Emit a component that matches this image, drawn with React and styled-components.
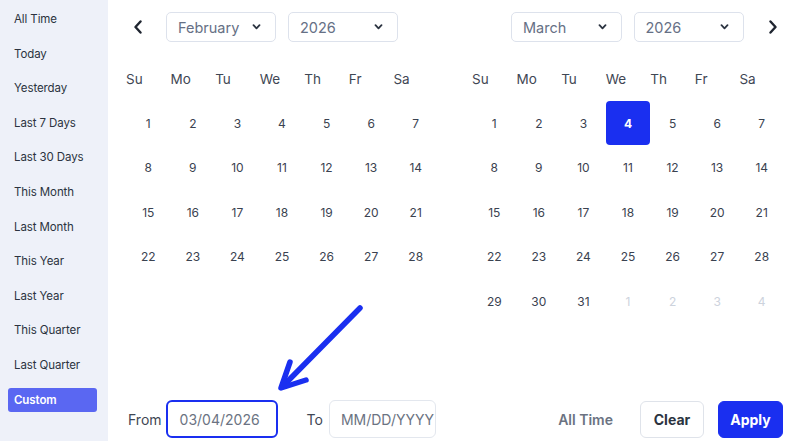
import React from "react";
import styled, { createGlobalStyle } from "styled-components";

const Global = createGlobalStyle`
  html, body { margin: 0; padding: 0; background: #fff; }
  body { font-family: Inter, "Noto Sans", "Liberation Sans", sans-serif; }
  * { box-sizing: border-box; }
`;

const BLUE = "#1a2ff0";

const Page = styled.div`
  display: flex;
  width: 792px;
  height: 441px;
  overflow: hidden;
`;

const Sidebar = styled.nav`
  width: 108px;
  flex-shrink: 0;
  background: #eef1f9;
  padding: 7px 11px 0 8px;
  display: flex;
  flex-direction: column;
  gap: 10.6px;
`;

const SideItem = styled.div`
  height: 24px;
  line-height: 24px;
  padding-left: 6px;
  border-radius: 3px;
  font-size: 11.5px;
  letter-spacing: -0.1px;
  color: ${p => (p.$active ? "#fff" : "#2b3340")};
  font-weight: ${p => (p.$active ? 600 : 400)};
  background: ${p => (p.$active ? "#5a67f2" : "transparent")};
  white-space: nowrap;
`;

const Main = styled.main`
  position: relative;
  flex: 1;
  min-width: 0;
  padding: 12px 9px 3px 18px;
  display: flex;
  flex-direction: column;
`;

const Calendars = styled.div`
  display: flex;
  gap: 34px;
`;

const Calendar = styled.section`
  width: 312px;
  flex-shrink: 0;
`;

const Header = styled.div`
  display: flex;
  align-items: center;
  height: 30px;
  gap: 12px;
`;

const NavSlot = styled.div`
  width: 28px;
  height: 30px;
  display: flex;
  align-items: center;
  justify-content: ${p => (p.$end ? "flex-end" : "flex-start")};
  padding: ${p => (p.$end ? "0 6px 0 0" : "0 0 0 7px")};
  flex-shrink: 0;
`;

const Spacer = styled.div`
  width: ${p => p.$w}px;
  flex-shrink: 0;
`;

const Select = styled.div`
  width: ${p => p.$w}px;
  height: 30px;
  border: 1px solid #dde2ec;
  border-radius: 5px;
  display: flex;
  align-items: center;
  justify-content: space-between;
  padding: 0 14px 0 11px;
  font-size: 14.5px;
  color: #667085;
`;

const Weekdays = styled.div`
  display: grid;
  grid-template-columns: repeat(7, 1fr);
  height: 20px;
  margin-top: 27px;
  align-items: center;
`;

const Weekday = styled.div`
  font-size: 13.5px;
  color: #3f4754;
`;

const Days = styled.div`
  display: grid;
  grid-template-columns: repeat(7, 1fr);
  grid-auto-rows: 44.6px;
  margin-top: 12px;
`;

const Day = styled.div`
  display: flex;
  align-items: center;
  justify-content: center;
  font-size: 12px;
  color: ${p => (p.$selected ? "#fff" : p.$muted ? "#cdd3dd" : "#3a4250")};
  font-weight: ${p => (p.$selected ? 700 : 400)};
  background: ${p => (p.$selected ? BLUE : "transparent")};
  border-radius: 4px;
  width: 44px;
  height: 44px;
  justify-self: center;
`;

const Footer = styled.div`
  margin-top: auto;
  display: flex;
  align-items: center;
  height: 38px;
`;

const Label = styled.span`
  font-size: 14px;
  color: #3f4754;
  margin-left: 2px;
  margin-right: ${p => p.$mr || 6}px;
`;

const DateInput = styled.div`
  width: ${p => p.$w}px;
  height: 38px;
  border: ${p => (p.$focused ? `2px solid ${BLUE}` : "1px solid #e3e7ee")};
  border-radius: 6px;
  display: flex;
  align-items: center;
  padding-left: ${p => (p.$focused ? 12 : 11)}px;
  font-size: 14px;
  color: #6b7382;
  overflow: hidden;
  white-space: nowrap;
  margin-right: ${p => p.$mr || 0}px;
`;

const Grow = styled.div`
  flex: 1;
`;

const TextButton = styled.button`
  border: none;
  background: none;
  font-family: inherit;
  font-size: 14px;
  font-weight: 600;
  color: #6b7382;
  padding: 0;
  margin-right: 27px;
`;

const Button = styled.button`
  height: 37px;
  width: ${p => p.$w}px;
  border-radius: 6px;
  font-family: inherit;
  font-size: 14px;
  font-weight: 700;
  border: 1px solid ${p => (p.$primary ? BLUE : "#dfe3ea")};
  background: ${p => (p.$primary ? BLUE : "#fff")};
  color: ${p => (p.$primary ? "#fff" : "#2b3340")};
  margin-left: ${p => p.$ml || 0}px;
`;

const Arrow = styled.svg`
  position: absolute;
  left: 0;
  top: 0;
  pointer-events: none;
`;

const Chevron = ({ dir }) => (
  <svg width="10" height="14" viewBox="0 0 10 14">
    <path
      d={dir === "left" ? "M7.5 1.5 L2.5 7 L7.5 12.5" : "M2.5 1.5 L7.5 7 L2.5 12.5"}
      fill="none"
      stroke="#1f2530"
      strokeWidth="2.4"
      strokeLinecap="round"
      strokeLinejoin="round"
    />
  </svg>
);

const Caret = () => (
  <svg width="9" height="6" viewBox="0 0 9 6">
    <path d="M1.5 1.2 L4.5 4.3 L7.5 1.2" fill="none" stroke="#2b3340" strokeWidth="1.8" strokeLinecap="round" strokeLinejoin="round" />
  </svg>
);

const WEEK = ["Su", "Mo", "Tu", "We", "Th", "Fr", "Sa"];
const sideItems = [
  "All Time", "Today", "Yesterday", "Last 7 Days", "Last 30 Days", "This Month",
  "Last Month", "This Year", "Last Year", "This Quarter", "Last Quarter", "Custom",
];

function buildDays(count, extra) {
  const out = [];
  for (let i = 1; i <= count; i++) out.push({ n: i });
  for (let i = 1; i <= extra; i++) out.push({ n: i, muted: true });
  return out;
}

const MonthCal = ({ month, side, days, selected }) => (
  <Calendar>
    <Header>
      {side === "left" ? (
        <NavSlot><Chevron dir="left" /></NavSlot>
      ) : (
        <Spacer $w={27} />
      )}
      <Select $w={side === "left" ? 110 : 111}>
        <span>{month}</span>
        <Caret />
      </Select>
      <Select $w={side === "left" ? 110 : 111}>
        <span>2026</span>
        <Caret />
      </Select>
      {side === "right" ? (
        <NavSlot $end><Chevron dir="right" /></NavSlot>
      ) : (
        <Spacer $w={28} />
      )}
    </Header>
    <Weekdays>
      {WEEK.map(w => <Weekday key={w}>{w}</Weekday>)}
    </Weekdays>
    <Days>
      {days.map((d, i) => (
        <Day key={i} $muted={d.muted} $selected={!d.muted && d.n === selected}>{d.n}</Day>
      ))}
    </Days>
  </Calendar>
);

export default function App() {
  return (
    <Page>
      <Global />
      <Sidebar>
        {sideItems.map(s => (
          <SideItem key={s} $active={s === "Custom"}>{s}</SideItem>
        ))}
      </Sidebar>
      <Main>
        <Calendars>
          <MonthCal month="February" side="left" days={buildDays(28, 0)} />
          <MonthCal month="March" side="right" days={buildDays(31, 4)} selected={4} />
        </Calendars>
        <Footer>
          <Label $mr={4}>From</Label>
          <DateInput $focused $w={112} $mr={27}>03/04/2026</DateInput>
          <Label>To</Label>
          <DateInput $w={107}>MM/DD/YYYY</DateInput>
          <Grow />
          <TextButton>All Time</TextButton>
          <Button $w={64}>Clear</Button>
          <Button $primary $w={65} $ml={14}>Apply</Button>
        </Footer>
        <Arrow width="684" height="441" viewBox="108 0 684 441">
          <path d="M360 308 L284 385" fill="none" stroke={BLUE} strokeWidth="5.5" strokeLinecap="round" />
          <path d="M290 362 L281 388 L306 380" fill="none" stroke={BLUE} strokeWidth="5.5" strokeLinecap="round" strokeLinejoin="round" />
        </Arrow>
      </Main>
    </Page>
  );
}
